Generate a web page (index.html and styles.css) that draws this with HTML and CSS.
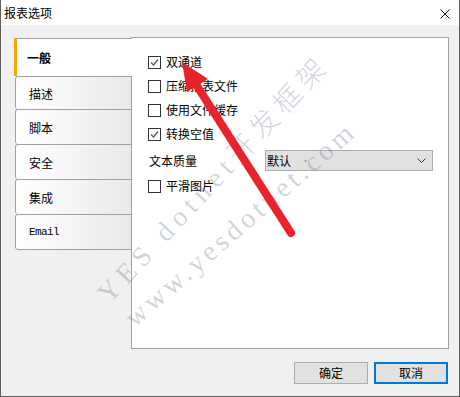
FILE: index.html
```html
<!DOCTYPE html>
<html lang="zh">
<head>
<meta charset="utf-8">
<title>报表选项</title>
<link rel="stylesheet" href="styles.css">
</head>
<body>
<div class="window">
  <div class="titlebar">
    <span class="title">报表选项</span>
    <span class="close"><svg width="10" height="10" viewBox="0 0 10 10"><path d="M0.5 0.5 L9.5 9.5 M9.5 0.5 L0.5 9.5" stroke="#111" stroke-width="1" fill="none"/></svg></span>
  </div>
  <div class="content">
    <div class="main">
      <div class="tabs">
        <div class="tab active">一般</div>
        <div class="tab second">描述</div>
        <div class="tab">脚本</div>
        <div class="tab">安全</div>
        <div class="tab">集成</div>
        <div class="tab last email">Email</div>
      </div>
      <div class="panel">
        <div class="row"><span class="cb checked"><svg width="11" height="11" viewBox="0 0 11 11"><polyline points="2,5.5 4.5,8 9,2.5" fill="none" stroke="#555" stroke-width="1.2"/></svg></span><span class="label">双通道</span></div>
        <div class="row"><span class="cb"></span><span class="label">压缩报表文件</span></div>
        <div class="row"><span class="cb"></span><span class="label">使用文件缓存</span></div>
        <div class="row"><span class="cb checked"><svg width="11" height="11" viewBox="0 0 11 11"><polyline points="2,5.5 4.5,8 9,2.5" fill="none" stroke="#555" stroke-width="1.2"/></svg></span><span class="label">转换空值</span></div>
        <div class="row quality"><span class="qlabel">文本质量</span>
          <div class="combo"><span class="ctext">默认</span><span class="dot">•</span><svg class="chev" width="9" height="5" viewBox="0 0 9 5"><polyline points="0.5,0.5 4.5,4.5 8.5,0.5" fill="none" stroke="#333" stroke-width="1"/></svg></div>
        </div>
        <div class="row"><span class="cb"></span><span class="label">平滑图片</span></div>
      </div>
    </div>
    <div class="buttons">
      <button class="btn">确定</button>
      <button class="btn default">取消</button>
    </div>
  </div>
  <div class="wm wm1">YES dotnet开发框架</div>
  <div class="wm wm2">www.yesdotnet.com</div>
  <svg class="arrow" width="460" height="397" viewBox="0 0 460 397">
    <line x1="196" y1="86" x2="290" y2="233" stroke="#e8232b" stroke-width="8" stroke-linecap="round"/>
    <polygon points="181,62 207,79 186,92" fill="#e8232b"/>
  </svg>
</div>
</body>
</html>
```
FILE: styles.css
```css
html, body {
  margin: 0;
  padding: 0;
}
body {
  width: 460px;
  height: 397px;
  overflow: hidden;
  font-family: "Noto Sans CJK SC", "Microsoft YaHei", sans-serif;
  font-size: 12px;
  color: #000;
}
.window {
  position: relative;
  width: 460px;
  height: 397px;
  box-sizing: border-box;
  border: 1px solid #5f5f5f;
  border-top: none;
  background: #f0f0f0;
  display: flex;
  flex-direction: column;
  overflow: hidden;
}
.titlebar {
  height: 25px;
  background: #fff;
  display: flex;
  align-items: center;
  padding-left: 3px;
  padding-right: 9px;
}
.title {
  font-size: 12px;
  line-height: 25px;
}
.close {
  margin-left: auto;
  display: flex;
  padding-top: 3px;
}
.content {
  flex: 1;
  padding: 12px 10px 0 13px;
  display: flex;
  flex-direction: column;
}
.main {
  display: flex;
  height: 312px;
}
.tabs {
  width: 118px;
  margin-right: -1px;
  position: relative;
  z-index: 1;
  display: flex;
  flex-direction: column;
}
.tab {
  box-sizing: border-box;
  height: 35px;
  margin-left: 1px;
  border: 1px solid #a0a0a0;
  border-bottom: none;
  border-radius: 3px 0 0 3px;
  background: linear-gradient(to right, #ffffff, #e9e9e9);
  display: flex;
  align-items: center;
  padding-left: 13px;
  font-size: 12px;
}
.tab.active {
  height: 38px;
  margin-top: 1px;
  margin-left: 0;
  border-left: 3px solid #f9a602;
  border-right: none;
  border-radius: 0;
  background: #fff;
  padding-left: 10px;
  font-weight: bold;
}
.tab.second {
  height: 33px;
}
.tab.last {
  height: 36px;
  border-bottom: 1px solid #a0a0a0;
}
.tab.email {
  font-family: "Liberation Mono", monospace;
  font-size: 11px;
  letter-spacing: -0.6px;
}
.panel {
  flex: 1;
  box-sizing: border-box;
  border: 1px solid #a0a0a0;
  background: #fff;
  padding: 12px 15px 0 16px;
}
.row {
  height: 24px;
  display: flex;
  align-items: center;
}
.cb {
  box-sizing: border-box;
  width: 13px;
  height: 13px;
  border: 1px solid #333;
  background: #fff;
  margin-right: 5px;
  display: flex;
}
.label {
  line-height: 16px;
}
.row.quality {
  height: 28px;
}
.qlabel {
  padding-left: 1px;
}
.combo {
  margin-left: auto;
  box-sizing: border-box;
  width: 168px;
  height: 21px;
  background: #e1e1e1;
  border: 1px solid #adadad;
  display: flex;
  align-items: center;
  padding-left: 1px;
  padding-right: 6px;
}
.dot {
  color: #a8a8a8;
  margin-left: 9px;
  font-size: 11px;
}
.chev {
  margin-left: auto;
}
.buttons {
  margin-top: 13px;
  padding-right: 1px;
  display: flex;
  justify-content: flex-end;
  gap: 6px;
}
.btn {
  box-sizing: border-box;
  width: 74px;
  height: 22px;
  background: #e1e1e1;
  border: 1px solid #adadad;
  font-family: "Noto Sans CJK SC", "Microsoft YaHei", sans-serif;
  font-size: 12px;
  color: #000;
  padding: 0;
  line-height: 18px;
}
.btn.default {
  border: 2px solid #0078d7;
}
.wm {
  position: absolute;
  white-space: nowrap;
  font-family: "Liberation Serif", "Noto Sans CJK SC", serif;
  font-weight: 300;
  font-size: 28px;
  line-height: 28px;
  color: rgba(110, 120, 150, 0.32);
  transform-origin: 0 100%;
  pointer-events: none;
  z-index: 2;
}
.wm1 {
  left: 112px;
  top: 280px;
  letter-spacing: 6px;
  transform: rotate(-47deg);
}
.wm2 {
  left: 137px;
  top: 304px;
  letter-spacing: 4px;
  transform: rotate(-41deg);
}
.arrow {
  position: absolute;
  left: 0;
  top: 0;
  pointer-events: none;
  z-index: 3;
}
```
